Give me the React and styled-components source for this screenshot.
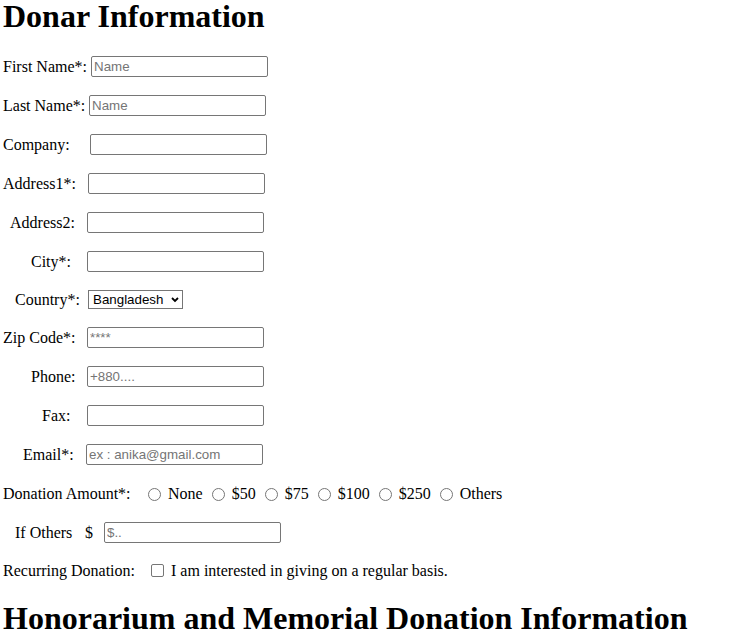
import React from "react";
import styled, { createGlobalStyle } from "styled-components";

const GlobalStyle = createGlobalStyle`
  html, body {
    margin: 0;
    padding: 0;
    background: #fff;
  }
  body {
    font-family: "Liberation Serif", "Times New Roman", serif;
    font-size: 16px;
    color: #000;
  }
`;

const Page = styled.div`
  padding: 0 3px;
`;

const Heading = styled.h1`
  margin: ${p => p.$top || 0}px 0 0;
  font-size: 32px;
  line-height: 32px;
  font-weight: bold;
  white-space: nowrap;
`;

const Form = styled.form`
  display: flex;
  flex-direction: column;
  gap: 16px;
  margin-top: 23px;
`;

const Row = styled.div`
  display: flex;
  align-items: center;
  height: ${p => p.$h || 23}px;
`;

const Label = styled.label`
  box-sizing: border-box;
  flex-shrink: 0;
  width: ${p => p.$w}px;
  padding-left: ${p => p.$indent || 0}px;
  white-space: nowrap;
`;

const TextInput = styled.input`
  box-sizing: border-box;
  width: 177px;
  height: 21px;
  margin: 0;
  padding: 1px 2px;
  border: 1px solid #767676;
  border-radius: 2px;
  background: #fff;
  color: #000;
  font: 13.33px "Liberation Sans", Arial, sans-serif;

  &::placeholder {
    color: #757575;
  }
`;

const SelectWrap = styled.div`
  position: relative;
  display: inline-flex;
`;

const Select = styled.select`
  box-sizing: border-box;
  width: 95px;
  height: 19px;
  margin: 0;
  padding: 0 18px 0 4px;
  border: 1px solid #767676;
  border-radius: 0;
  background: #fff;
  color: #000;
  font: 13.33px "Liberation Sans", Arial, sans-serif;
  appearance: none;
  -webkit-appearance: none;
`;

const Chevron = styled.svg`
  position: absolute;
  right: 4px;
  top: 7px;
  pointer-events: none;
`;

const Options = styled.div`
  display: flex;
  align-items: center;
  gap: 9px;
`;

const Option = styled.label`
  display: inline-flex;
  align-items: center;
  gap: 7px;
  white-space: nowrap;
`;

const Radio = styled.input.attrs({ type: "radio" })`
  appearance: none;
  -webkit-appearance: none;
  box-sizing: border-box;
  width: 13px;
  height: 13px;
  margin: 0;
  border: 1px solid #767676;
  border-radius: 50%;
  background: #fff;
`;

const Checkbox = styled.input.attrs({ type: "checkbox" })`
  appearance: none;
  -webkit-appearance: none;
  box-sizing: border-box;
  width: 13px;
  height: 13px;
  margin: 0 0 2px;
  border: 1px solid #767676;
  border-radius: 2px;
  background: #fff;
`;

const Dollar = styled.span`
  flex-shrink: 0;
  width: 19px;
`;

const fields = [
  { label: "First Name*:", w: 88, placeholder: "Name" },
  { label: "Last Name*:", w: 86, placeholder: "Name" },
  { label: "Company:", w: 87 },
  { label: "Address1*:", w: 85 },
  { label: "Address2:", w: 84, indent: 7 },
  { label: "City*:", w: 84, indent: 28 },
];

const moreFields = [
  { label: "Zip Code*:", w: 84, placeholder: "****" },
  { label: "Phone:", w: 84, indent: 28, placeholder: "+880...." },
  { label: "Fax:", w: 84, indent: 39 },
  { label: "Email*:", w: 83, indent: 20, placeholder: "ex : anika@gmail.com" },
];

const amounts = ["None", "$50", "$75", "$100", "$250", "Others"];

const FieldRow = ({ label, w, indent, placeholder }) => (
  <Row>
    <Label $w={w} $indent={indent}>{label}</Label>
    <TextInput type="text" placeholder={placeholder} />
  </Row>
);

const App = () => {
  return (
    <Page>
      <GlobalStyle />
      <Heading>Donar Information</Heading>
      <Form>
        {fields.map(f => <FieldRow key={f.label} {...f} />)}
        <Row $h={21}>
          <Label $w={85} $indent={12}>Country*:</Label>
          <SelectWrap>
            <Select defaultValue="Bangladesh">
              <option>Bangladesh</option>
              <option>India</option>
              <option>Nepal</option>
            </Select>
            <Chevron width="8" height="6" viewBox="0 0 8 6">
              <path d="M1 1l3 3 3-3" fill="none" stroke="#000" strokeWidth="1.8" />
            </Chevron>
          </SelectWrap>
        </Row>
        {moreFields.map(f => <FieldRow key={f.label} {...f} />)}
        <Row $h={24}>
          <Label $w={145}>Donation Amount*:</Label>
          <Options>
            {amounts.map(a => (
              <Option key={a}>
                <Radio name="amount" />
                {a}
              </Option>
            ))}
          </Options>
        </Row>
        <Row $h={21}>
          <Label $w={82} $indent={12}>If Others</Label>
          <Dollar>$</Dollar>
          <TextInput type="text" placeholder="$.." />
        </Row>
        <Row $h={24}>
          <Label $w={148}>Recurring Donation:</Label>
          <Option>
            <Checkbox />
            I am interested in giving on a regular basis.
          </Option>
        </Row>
      </Form>
      <Heading $top={19}>Honorarium and Memorial Donation Information</Heading>
    </Page>
  );
};

export default App;
